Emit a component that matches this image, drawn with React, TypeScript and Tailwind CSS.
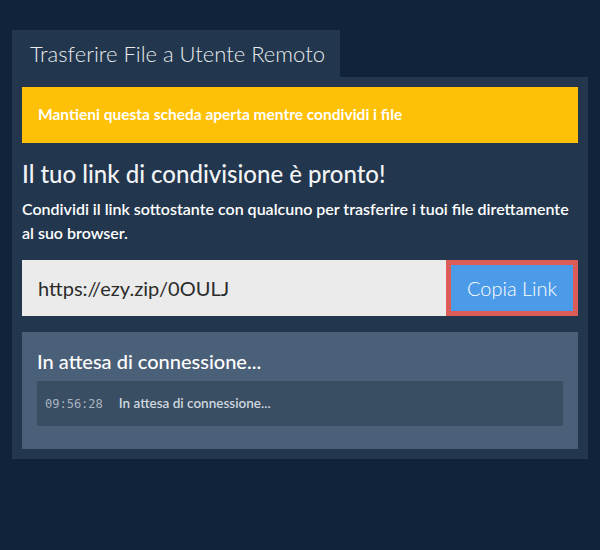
export default function App() {
  return (
    <div className="min-h-[550px] bg-[#10233a] px-[12px] pt-[30px] font-['Lato','Liberation_Sans',sans-serif]">
      {/* Tab */}
      <div className="flex h-[47px] w-[328px] items-center bg-[#22364d] pl-[18px] text-[22px] font-light text-[#e8ebee]">
        Trasferire File a Utente Remoto
      </div>

      {/* Panel */}
      <div className="bg-[#22364d] p-[10px]">
        <div className="flex h-[56px] items-center bg-[#ffc107] px-[16px] text-[15.5px] font-bold text-white">
          Mantieni questa scheda aperta mentre condividi i file
        </div>

        <h2 className="mt-[17px] text-[24px] leading-[28px] font-medium text-[#f1f3f5]">
          Il tuo link di condivisione è pronto!
        </h2>
        <p className="mt-[9px] text-[16px] leading-[24px] font-semibold text-white">
          Condividi il link sottostante con qualcuno per trasferire i tuoi file direttamente al suo browser.
        </p>

        <div className="mt-[15px] flex h-[56px]">
          <div className="flex flex-1 items-center bg-[#ebebeb] pl-[16px] text-[20px] text-[#2b2b2b]">
            https://ezy.zip/0OULJ
          </div>
          <button className="w-[132px] border-[5px] border-[#dc5c58] bg-[#4c9be8] text-[20px] font-light text-white">
            Copia Link
          </button>
        </div>

        <div className="mt-[16px] bg-[#4a6078] px-[15px] pt-[17px] pb-[23px]">
          <h3 className="text-[20px] leading-[24px] font-medium text-white">In attesa di connessione...</h3>
          <div className="mt-[8px] flex h-[45px] items-center bg-[#394e63] px-[8px]">
            <span className="font-['DejaVu_Sans_Mono',monospace] text-[12px] text-[#a9b4c0]">09:56:28</span>
            <span className="ml-[16px] text-[13.5px] font-semibold text-[#cfd7df]">In attesa di connessione...</span>
          </div>
        </div>
      </div>
    </div>
  );
}
